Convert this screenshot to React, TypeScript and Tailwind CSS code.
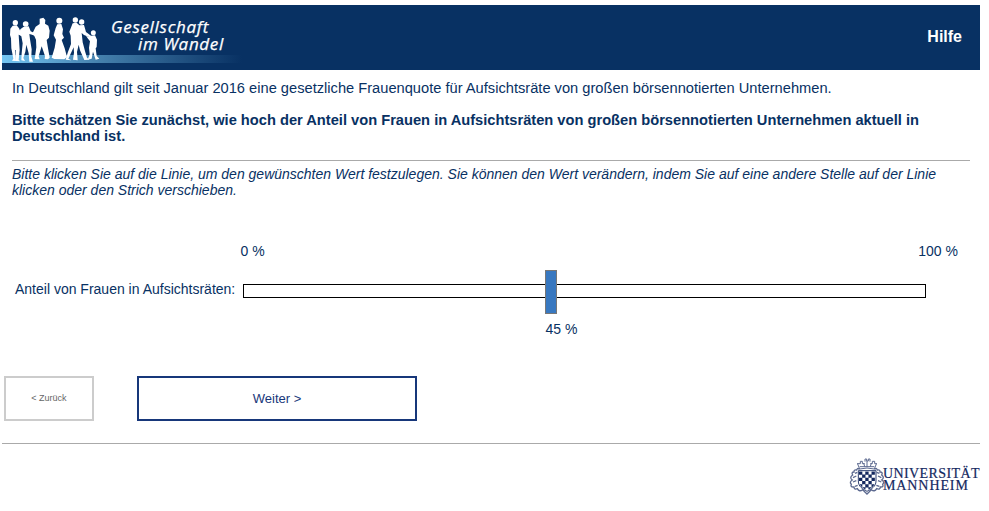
import { useState } from "react";

function PeopleLogo() {
  return (
    <svg className="block h-[65px] w-[105px] shrink-0" viewBox="6 15 315 195" fill="#fff" aria-hidden="true">
      <circle cx="46" cy="68" r="8" />
      <path d="M38 77 L50 76 L57 85 L63 98 L60 105 L56 104 L57 120 L59 150 L56 180 L61 184 L47 183 L47 150 L45 150 L47 183 L36 182 L40 176 L34 145 L33 115 L30 105 L31 86Z" />
      <circle cx="77" cy="72" r="8.500" />
      <path d="M70 81 L86 79 L92 94 L103 99 L99 105 L88 102 L90 118 L95 148 L94 170 L99 185 L88 185 L86 160 L79 134 L76 155 L70 174 L75 183 L64 181 L65 160 L68 130 L64 109 L57 104 L61 88Z" />
      <path d="M119 56 L130 53 L136 60 L135 71 L145 77 L149 92 L147 113 L140 120 L143 139 L149 173 L144 178 L134 177 L135 168 L125 139 L116 169 L119 178 L104 177 L109 142 L108 119 L103 108 L96 103 L107 80 L119 72Z" />
      <circle cx="178" cy="62" r="9" />
      <path d="M172 73 L184 72 L189 88 L187 102 L192 113 L185 120 L194 145 L201 171 L193 178 L163 177 L155 173 L164 143 L168 119 L161 106 L167 84Z" />
      <circle cx="226" cy="60" r="8" />
      <circle cx="245" cy="66" r="8" />
      <path d="M218 70 L230 68 L238 76 L252 75 L258 96 L273 107 L269 112 L252 105 L245 99 L248 127 L256 157 L261 173 L268 179 L253 180 L240 151 L236 134 L231 156 L233 181 L219 179 L222 158 L221 142 L205 176 L214 181 L197 179 L203 158 L213 132 L212 107 L208 95Z" />
      <circle cx="280" cy="98" r="7.500" />
      <path d="M273 107 L285 106 L291 119 L290 141 L287 145 L290 168 L298 176 L287 179 L279 155 L275 176 L263 179 L269 163 L267 143 L270 124 L263 115 L258 107 L266 110Z" />
    </svg>
  );
}

function Crest() {
  const squares: string[] = [];
  for (let r = 0; r < 6; r++) {
    for (let c = 0; c < 5; c++) {
      if ((r + c) % 2 === 0) squares.push(`M${42 + c * 9.4} ${49 + r * 9.6}h10v10h-10z`);
    }
  }
  return (
    <svg className="block h-[42px] w-[38px] shrink-0" viewBox="9 0 114 126" aria-hidden="true">
      <defs>
        <clipPath id="shield">
          <path d="M42 49H91V78C91 93 78 100 66 106C54 100 42 93 42 78Z" />
        </clipPath>
      </defs>
      <g fill="none" stroke="#5d6a90">
        <path d="M38 27L44 42Q66 36 88 42L94 27M36 26h10v-7h6v7h7M60 20v-8h5v6h5v-6h5v8M76 26h6v-7h7v7h7M44 35h44M56 24l3 11M79 24l-3 11M66 18v18" strokeWidth="3" />
        <path d="M43 44Q39 36 35 45Q26 43 27 51Q18 51 23 60Q12 68 22 75Q12 81 19 88Q15 97 27 96Q27 105 37 101Q43 112 53 104Q61 112 66 117Q71 112 79 104Q89 112 95 101Q106 105 106 96Q117 97 113 88Q120 81 110 75Q120 68 110 60Q115 51 105 51Q106 43 97 45Q93 36 89 44" strokeWidth="4" />
        <path d="M37 52L30 55M34 63L24 68M34 77L24 81M38 91L30 94M95 52L103 55M99 63L109 68M99 77L109 81M94 91L103 94" strokeWidth="4" />
      </g>
      <path d="M40 47H93V78C93 95 79 102 66 109C53 102 40 95 40 78Z" fill="#fff" stroke="#2d3f70" strokeWidth="3" />
      <path clipPath="url(#shield)" d={squares.join("")} fill="#14285f" />
    </svg>
  );
}

export default function App() {
  const [value, setValue] = useState(45);

  return (
    <div className="h-[511px] w-[989px] overflow-hidden bg-white pl-[2px] pt-[5px] font-['Liberation_Sans',Arial,sans-serif] text-[#083163]">
      <header className="relative flex h-[65px] w-[978px] bg-[#083163] text-white">
        <div className="absolute left-0 top-[50px] h-[8px] w-[240px] bg-linear-to-r from-[#75c6f3] via-[#4682ae] via-40% to-[#083163]" />
        <div className="relative flex">
          <PeopleLogo />
          <div className="whitespace-nowrap pt-[13px] font-['Open_Sans','Noto_Sans',sans-serif] text-[17px] font-medium italic leading-[17px] [-webkit-text-stroke:0.25px_white]">
            <div className="ml-[4px] tracking-[0.7px]">Gesellschaft</div>
            <div className="ml-[31px] tracking-[0.65px]">im Wandel</div>
          </div>
        </div>
        <a className="relative ml-auto mr-[18px] mt-[22px] text-[16px] font-bold leading-[20px]">Hilfe</a>
      </header>

      <main className="w-[978px]">
        <section className="ml-[10px] mr-[10px] h-[91px] whitespace-nowrap border-b border-[#aaa] pt-[10px] text-[14.660px] leading-[16px]">
          <p>In Deutschland gilt seit Januar 2016 eine gesetzliche Frauenquote für Aufsichtsräte von großen börsennotierten Unternehmen.</p>
          <p className="mt-[16px] font-bold">
            Bitte schätzen Sie zunächst, wie hoch der Anteil von Frauen in Aufsichtsräten von großen börsennotierten Unternehmen aktuell in
            <br />
            Deutschland ist.
          </p>
        </section>
        <p className="ml-[10px] mt-[5px] whitespace-nowrap text-[14px] italic leading-[16px]">
          Bitte klicken Sie auf die Linie, um den gewünschten Wert festzulegen. Sie können den Wert verändern, indem Sie auf eine andere Stelle auf der Linie
          <br />
          klicken oder den Strich verschieben.
        </p>

        <section className="mt-[45px] h-[133px] text-[14px] leading-[16px]">
          <div className="flex justify-between pl-[238.500px] pr-[22px]">
            <span>0 %</span>
            <span>100 %</span>
          </div>
          <div className="mt-[11px] flex h-[44px] items-start">
            <label className="ml-[13px] mt-[11px] w-[228px] whitespace-nowrap">Anteil von Frauen in Aufsichtsräten:</label>
            <div
              className="relative mt-[14px] h-[14px] w-[683px] border border-black"
              onClick={(e) => {
                const box = e.currentTarget.getBoundingClientRect();
                setValue(Math.round(((e.clientX - box.left) / box.width) * 100));
              }}
            >
              <div
                className="absolute top-[-15px] -ml-[5px] h-[44px] w-[12px] border border-[#777] bg-[#3878c0]"
                style={{ left: `${value}%` }}
              />
              <span className="absolute top-[36px] -ml-[5px] whitespace-nowrap" style={{ left: `${value}%` }}>
                {value} %
              </span>
            </div>
          </div>
        </section>

        <div className="flex h-[67px] gap-[43px] pl-[2px]">
          <button className="h-[45px] w-[90px] border-2 border-[#ccc] pt-px text-[9px] text-[#666]">&lt; Zurück</button>
          <button className="h-[45px] w-[280px] border-2 border-[#17377a] text-[13px] text-[#17377a]">Weiter &gt;</button>
        </div>
      </main>

      <footer className="flex w-[978px] justify-end border-t border-[#aaa] pt-[11px]">
        <div className="flex w-[132px]">
          <Crest />
          <div className="-ml-[3px] whitespace-nowrap pt-[13px] font-['Liberation_Serif',serif] text-[14px] leading-[12px] text-[#14285f] [-webkit-text-stroke:0.2px_#14285f]">
            <div className="tracking-[0.4px]">UNIVERSITÄT</div>
            <div className="tracking-[0.9px]">MANNHEIM</div>
          </div>
        </div>
      </footer>
    </div>
  );
}
